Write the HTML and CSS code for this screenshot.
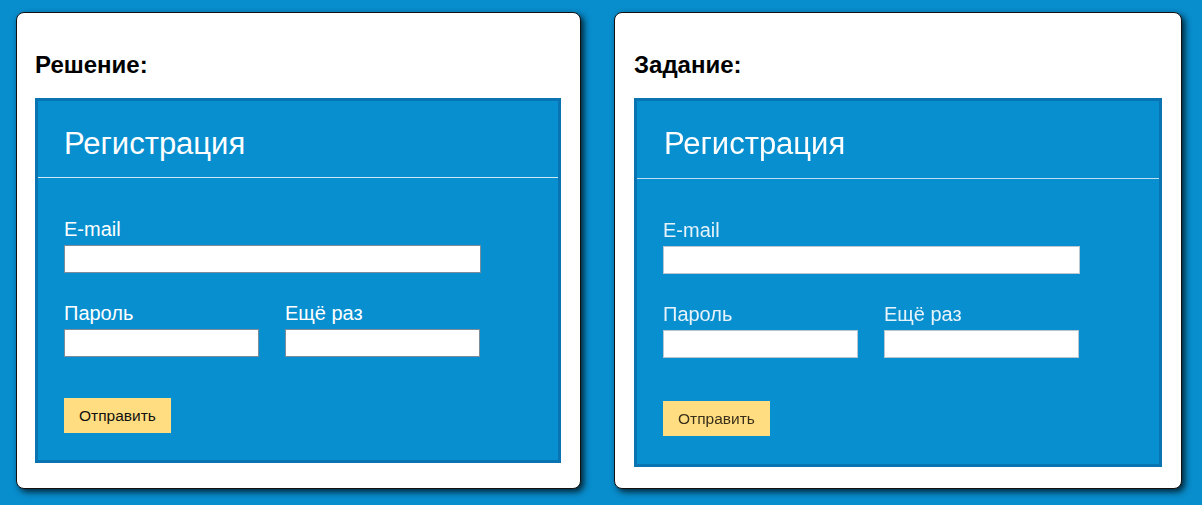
FILE: index.html
```html
<!DOCTYPE html>
<html lang="ru">
<head>
<meta charset="utf-8">
<title>Регистрация</title>
<link rel="stylesheet" href="styles.css">
</head>
<body>
<div class="page">
  <section class="card">
    <h2 class="card-title">Решение:</h2>
    <div class="reg">
      <div class="reg-head">Регистрация</div>
      <form class="reg-form">
        <div class="field">
          <label class="lbl">E-mail</label>
          <input class="inp inp-wide" type="text">
        </div>
        <div class="row">
          <div class="field">
            <label class="lbl">Пароль</label>
            <input class="inp" type="password">
          </div>
          <div class="field">
            <label class="lbl">Ещё раз</label>
            <input class="inp" type="password">
          </div>
        </div>
        <button class="btn" type="button">Отправить</button>
      </form>
    </div>
  </section>
  <section class="card card-task">
    <h2 class="card-title">Задание:</h2>
    <div class="reg reg-img">
      <div class="reg-head">Регистрация</div>
      <form class="reg-form">
        <div class="field">
          <label class="lbl">E-mail</label>
          <input class="inp inp-wide" type="text">
        </div>
        <div class="row">
          <div class="field">
            <label class="lbl">Пароль</label>
            <input class="inp" type="password">
          </div>
          <div class="field">
            <label class="lbl">Ещё раз</label>
            <input class="inp" type="password">
          </div>
        </div>
        <button class="btn" type="button">Отправить</button>
      </form>
    </div>
  </section>
</div>
</body>
</html>
```
FILE: styles.css
```css
* { box-sizing: border-box; }
html, body { margin: 0; padding: 0; }
body {
  background: #088dcd;
  font-family: "Liberation Sans", Arial, sans-serif;
  height: 505px;
  overflow: hidden;
}
.page {
  display: flex;
  align-items: flex-start;
  gap: 33px;
  padding: 12px 0 0 16px;
}
.card {
  width: 565px;
  height: 477px;
  background: #fff;
  border: 1px solid #111;
  border-radius: 8px;
  box-shadow: 3px 3px 6px rgba(0, 0, 0, 0.75);
  padding: 0 18px 0 18px;
}
.card-task {
  width: 568px;
  padding-left: 19px;
}
.card-title {
  margin: 38px 0 19px 0;
  font-size: 24px;
  line-height: 28px;
  font-weight: bold;
  color: #000;
}
.reg {
  width: 526px;
  background: #078fcf;
  border: 3px solid #0a74b3;
  color: #fff;
}
.reg-head {
  padding: 26px 26px 16px 26px;
  font-size: 31px;
  line-height: 34px;
  border-bottom: 1px solid #cfe9f7;
}
.reg-form {
  display: flex;
  flex-direction: column;
  align-items: flex-start;
  padding: 40px 26px 27px 26px;
}
.field {
  display: flex;
  flex-direction: column;
}
.lbl {
  font-size: 20px;
  line-height: 23px;
  margin-bottom: 4px;
}
.inp {
  width: 195px;
  height: 28px;
  border: 1px solid #7c8c9b;
  background: #fff;
  margin: 0;
  padding: 0;
}
.inp-wide { width: 417px; }
.row {
  display: flex;
  gap: 26px;
  margin-top: 29px;
}
.btn {
  margin-top: 41px;
  width: 107px;
  height: 35px;
  border: none;
  background: #ffdd80;
  color: #111;
  font-family: "Liberation Sans", Arial, sans-serif;
  font-size: 15.5px;
  padding: 0;
}
/* right card: picture of the task, slightly scaled and soft */
.reg-img {
  width: 528px;
  filter: blur(0.35px);
}
.reg-img .reg-head {
  padding-left: 27px;
  padding-bottom: 17px;
  border-bottom-color: #bfe0f2;
}
.reg-img .reg-form {
  padding-left: 26px;
  padding-bottom: 28px;
}
.reg-img .lbl { color: #e6f3fb; }
.reg-img .inp { border-color: #b9c7d2; }
.reg-img .row { margin-top: 29px; }
.reg-img .btn { margin-top: 43px; color: #3a2f1a; }
```
